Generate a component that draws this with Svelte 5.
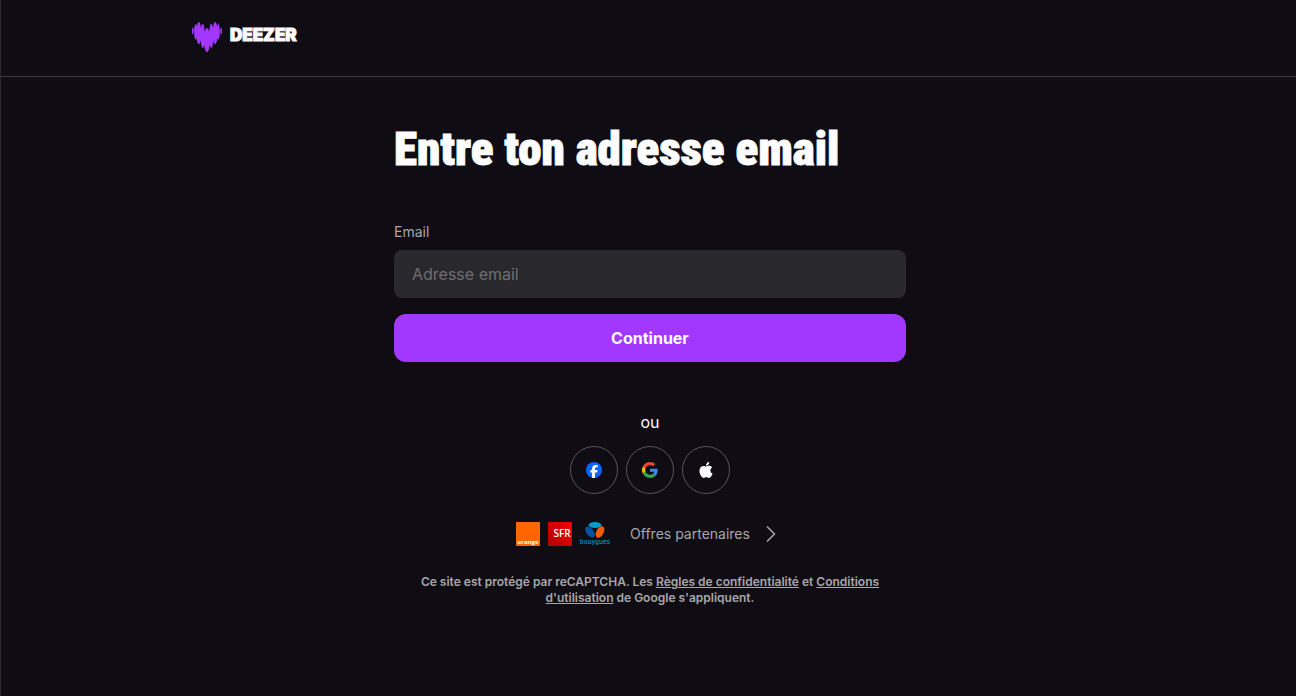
<script>
  let email = $state('');

  function submit(event) {
    event.preventDefault();
  }
</script>

<div class="page">
  <header class="header">
    <a class="logo" href="/" aria-label="Deezer">
      <svg class="heart" viewBox="0 0 24 24" aria-hidden="true">
        <path d="M.693 10.024c.381 0 .693-1.256.693-2.807 0-1.55-.312-2.807-.693-2.807C.312 4.41 0 5.666 0 7.217s.312 2.808.693 2.808ZM21.038 1.56c-.364 0-.684.805-.91 2.096C19.765 1.446 19.184 0 18.526 0c-.78 0-1.464 2.036-1.784 5-.312-2.158-.788-3.536-1.325-3.536-.745 0-1.386 2.704-1.62 6.472-.442-1.932-1.083-3.145-1.793-3.145s-1.35 1.213-1.793 3.145c-.242-3.76-.874-6.463-1.628-6.463-.537 0-1.013 1.378-1.325 3.535C6.938 2.037 6.262 0 5.474 0c-.658 0-1.247 1.447-1.602 3.665-.217-1.291-.546-2.105-.91-2.105-.675 0-1.221 2.807-1.221 6.272 0 3.466.546 6.273 1.221 6.273.277 0 .537-.476.736-1.273.32 2.928.996 4.938 1.776 4.938.606 0 1.143-1.204 1.507-3.11.251 3.622.875 6.195 1.602 6.195.46 0 .875-1.023 1.187-2.677C10.142 21.6 11.002 24 12.004 24c1.005 0 1.863-2.4 2.235-5.822.312 1.654.727 2.677 1.186 2.677.728 0 1.352-2.573 1.603-6.195.364 1.906.9 3.11 1.507 3.11.78 0 1.455-2.01 1.775-4.938.208.797.46 1.273.737 1.273.675 0 1.22-2.807 1.22-6.273-.008-3.457-.553-6.272-1.23-6.272ZM23.307 10.024c.381 0 .693-1.256.693-2.807 0-1.55-.312-2.807-.693-2.807-.381 0-.693 1.256-.693 2.807s.312 2.808.693 2.808Z" />
      </svg>
      <span>DEEZER</span>
    </a>
  </header>

  <main class="content">
    <h1>Entre ton adresse email</h1>

    <form onsubmit={submit}>
      <label for="email">Email</label>
      <input id="email" type="email" placeholder="Adresse email" bind:value={email} />
      <button class="submit" type="submit">Continuer</button>
    </form>

    <p class="or">ou</p>

    <div class="socials">
      <button class="social" type="button" aria-label="Facebook">
        <svg viewBox="0 0 24 24">
          <circle cx="12" cy="12" r="12" fill="#0866ff" />
          <path fill="#fff" d="M9.1 23.65v-7.98H6.63v-3.67H9.1v-1.58c0-4.08 1.85-5.98 5.86-5.98.76 0 2.07.15 2.61.3v3.32c-.28-.03-.78-.04-1.39-.04-1.97 0-2.73.74-2.73 2.68v1.3h3.92l-.67 3.67h-3.25V24c-1.4.1-3.1 0-4.35-.35Z" />
        </svg>
      </button>
      <button class="social" type="button" aria-label="Google">
        <svg viewBox="0 0 48 48">
          <path fill="#ea4335" d="M24 9.5c3.54 0 6.71 1.22 9.21 3.6l6.85-6.85C35.9 2.38 30.47 0 24 0 14.62 0 6.51 5.38 2.56 13.22l7.98 6.19C12.43 13.72 17.74 9.5 24 9.5z" />
          <path fill="#4285f4" d="M46.98 24.55c0-1.57-.15-3.09-.38-4.55H24v9.02h12.94c-.58 2.96-2.26 5.48-4.78 7.18l7.73 6c4.51-4.18 7.09-10.36 7.09-17.65z" />
          <path fill="#fbbc05" d="M10.53 28.59c-.48-1.45-.76-2.99-.76-4.59s.27-3.14.76-4.59l-7.98-6.19C.92 16.46 0 20.12 0 24c0 3.88.92 7.54 2.56 10.78l7.97-6.19z" />
          <path fill="#34a853" d="M24 48c6.48 0 11.93-2.13 15.89-5.81l-7.73-6c-2.15 1.45-4.92 2.3-8.16 2.3-6.26 0-11.57-4.22-13.47-9.91l-7.98 6.19C6.51 42.62 14.62 48 24 48z" />
        </svg>
      </button>
      <button class="social" type="button" aria-label="Apple">
        <svg viewBox="0 0 24 24">
          <path fill="#fff" d="M12.152 6.896c-.948 0-2.415-1.078-3.96-1.04-2.04.027-3.91 1.183-4.961 3.014-2.117 3.675-.546 9.103 1.519 12.09 1.013 1.454 2.208 3.09 3.792 3.039 1.52-.065 2.09-.987 3.935-.987 1.831 0 2.35.987 3.96.948 1.637-.026 2.676-1.48 3.676-2.948 1.156-1.688 1.636-3.325 1.662-3.415-.039-.013-3.182-1.221-3.22-4.857-.026-3.04 2.48-4.494 2.597-4.559-1.429-2.09-3.623-2.324-4.39-2.376-2-.156-3.675 1.09-4.61 1.09zM15.53 3.83c.843-1.012 1.4-2.427 1.245-3.83-1.207.052-2.662.805-3.532 1.818-.78.896-1.454 2.338-1.273 3.714 1.338.104 2.715-.688 3.559-1.701" />
        </svg>
      </button>
    </div>

    <a class="partners" href="/partners">
      <span class="brands">
        <svg width="24" height="24" viewBox="0 0 24 24">
          <rect width="24" height="24" fill="#ff6600" />
          <text class="orange" x="12" y="22" text-anchor="middle">orange</text>
        </svg>
        <svg width="24" height="24" viewBox="0 0 24 24">
          <defs>
            <linearGradient id="sfr" x1="0" y1="1" x2="1" y2="0">
              <stop offset="0" stop-color="#b00000" />
              <stop offset="1" stop-color="#f50000" />
            </linearGradient>
          </defs>
          <rect width="24" height="24" fill="url(#sfr)" />
          <text class="sfr" x="14" y="15" text-anchor="middle">SFR</text>
        </svg>
        <svg width="32" height="24" viewBox="0 0 32 24">
          <ellipse cx="15" cy="3" rx="6.500" ry="3" fill="#009dcc" />
          <ellipse cx="10" cy="10" rx="3.500" ry="6.300" fill="#0055a5" transform="rotate(-38 10 10)" />
          <ellipse cx="20" cy="10" rx="3.600" ry="6.300" fill="#f25c05" transform="rotate(28 20 10)" />
          <text class="bouygues" x="15" y="22" text-anchor="middle">bouygues</text>
        </svg>
      </span>
      <span class="partners-label">Offres partenaires</span>
      <svg class="chevron" viewBox="0 0 10 16">
        <path d="M1 0.500 8.500 8 1 15.500" />
      </svg>
    </a>

    <p class="legal">
      Ce site est protégé par reCAPTCHA. Les <a href="/privacy">Règles de confidentialité</a> et
      <a href="/terms">Conditions d'utilisation</a> de Google s'appliquent.
    </p>
  </main>
</div>

<style>
  :global(body) {
    background: #0f0d13;
  }

  .page {
    min-height: 100vh;
    box-sizing: border-box;
    border-left: 1px solid #29282d;
    background: #0f0d13;
    color: #fdfcfe;
    font-family: Inter, sans-serif;
  }

  .header {
    display: flex;
    height: 76px;
    padding: 0 191px;
    align-items: center;
    border-bottom: 1px solid #3f3d42;
  }

  .logo {
    display: flex;
    align-items: center;
    gap: 8px;
    padding-bottom: 3px;
    color: #fdfcfe;
    font-size: 17px;
    font-weight: 900;
    line-height: 20px;
    text-decoration: none;
  }

  .logo span {
    padding-bottom: 4px;
    -webkit-text-stroke: 1px #fdfcfe;
  }

  .heart {
    width: 30px;
    height: 30px;
    fill: #a238ff;
  }

  .content {
    display: flex;
    max-width: 512px;
    margin: 0 auto;
    padding: 44px 16px 0 19px;
    flex-direction: column;
    align-items: center;
  }

  h1 {
    width: 100%;
    margin: 0 0 45px;
    font-family: "Roboto Condensed", "Liberation Sans Narrow", sans-serif;
    font-size: 47px;
    font-weight: 900;
    line-height: 56px;
    -webkit-text-stroke: 1px #fdfcfe;
  }

  form {
    display: flex;
    width: 100%;
    flex-direction: column;
  }

  label {
    margin-bottom: 8px;
    color: #a9a6aa;
    font-size: 14px;
    line-height: 20px;
  }

  input {
    height: 48px;
    box-sizing: border-box;
    margin: 0 0 16px;
    padding: 0 18px;
    border: 0;
    border-radius: 8px;
    background: #29282d;
    color: #fdfcfe;
    font: 16px/24px Inter, sans-serif;
  }

  input::placeholder {
    color: #6f6d71;
    opacity: 1;
  }

  .submit {
    height: 48px;
    border: 0;
    border-radius: 12px;
    background: #a238ff;
    color: #fdfcfe;
    font: 700 16px/24px Inter, sans-serif;
    cursor: pointer;
  }

  .or {
    margin: 48px 0 12px;
    font-size: 16px;
    line-height: 24px;
  }

  .socials {
    display: flex;
    gap: 8px;
  }

  .social {
    display: flex;
    width: 48px;
    height: 48px;
    padding: 0;
    align-items: center;
    justify-content: center;
    border: 1px solid #56545a;
    border-radius: 50%;
    background: transparent;
    cursor: pointer;
  }

  .social svg {
    width: 16px;
    height: 16px;
  }

  .partners {
    display: flex;
    margin: 28px 0;
    padding-right: 8px;
    align-items: center;
    color: #a9a6aa;
    font-size: 14px;
    line-height: 24px;
    text-decoration: none;
  }

  .brands {
    display: flex;
    gap: 8px;
  }

  .brands text {
    font-family: "Open Sans", sans-serif;
    fill: #fff;
  }

  .brands .orange {
    font-size: 6px;
    font-weight: 700;
  }

  .brands .sfr {
    font-size: 10px;
    font-weight: 600;
  }

  .brands .bouygues {
    font-family: "Roboto Condensed", sans-serif;
    font-size: 8px;
    fill: #009dcc;
  }

  .partners-label {
    margin: 0 16px 0 18px;
  }

  .chevron {
    width: 10px;
    height: 16px;
    fill: none;
    stroke: #a9a6aa;
    stroke-width: 1.5;
  }

  .legal {
    margin: 0;
    padding: 0 16px;
    color: #a9a6aa;
    font-size: 12px;
    font-weight: 600;
    line-height: 16px;
    text-align: center;
  }

  .legal a {
    color: inherit;
  }
</style>
